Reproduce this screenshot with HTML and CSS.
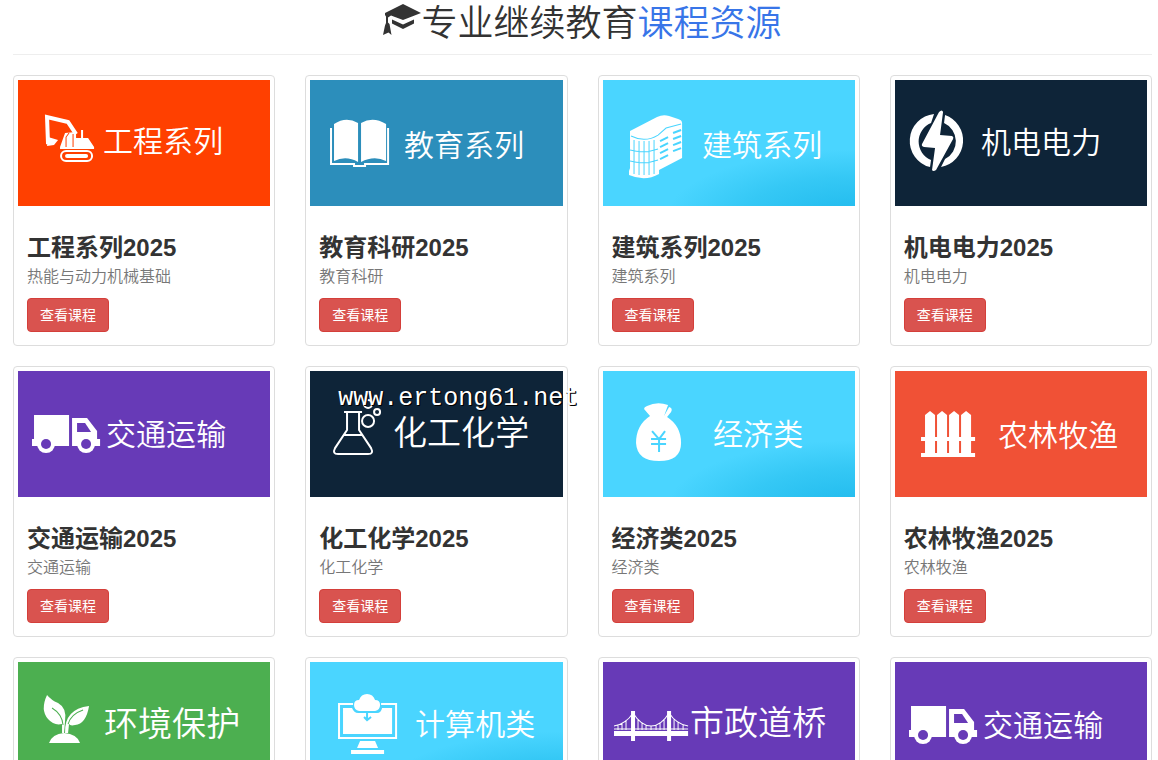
FILE: index.html
```html
<!DOCTYPE html>
<html lang="zh-CN">
<head>
  <meta charset="UTF-8">
  <meta name="viewport" content="width=device-width, initial-scale=1.0">
  <title>专业继续教育课程资源</title>
  <link rel="stylesheet" href="styles.css">
</head>
<body>

  <header class="page-header">
    <h1>
      <svg class="cap" viewBox="0 0 38 31" aria-hidden="true">
        <path d="M2 9L20 0l18 9-18 7L8 11.500l-3 2v5l1.500 1.500 2 11-3-2.500L0 31l2-9.500 1-2.500v-6.500L2 11z"/>
        <path d="M9 15.500l11 5 11-5v4L20 25 9 19.500z"/>
      </svg>专业继续教育<span>课程资源</span>
    </h1>
  </header>

  <main class="courses">

    <div class="card">
      <svg class="banner orange" viewBox="0 0 252 126">
        <path class="line thick" d="M30 64l-1-27 21 5 8 12"/>
        <path d="M30 57l10 3-4 5-7 1z"/>
        <path d="M42 67l5-14 11-1v6h5V50h2v8h5l6 9v2H42z"/>
        <path class="cut" d="M48 67V57l3-4M55 67V54"/>
        <rect class="line" x="43" y="71" width="31" height="10" rx="5"/>
        <rect x="47" y="74" width="23" height="4" rx="2"/>
        <text x="85" y="72">工程系列</text>
      </svg>
      <div class="caption">
        <h3>工程系列2025</h3>
        <p>热能与动力机械基础</p>
        <a class="btn" href="#">查看课程</a>
      </div>
    </div>

    <div class="card">
      <svg class="banner blue" viewBox="0 0 252 126">
        <path d="M24 44q12-8 24-1v39q-12-7-24-1zM51 43q12-7 25 1v37q-12-6-25 1z"/>
        <path class="line" d="M21 48v36h23v2h11v-2h23V48"/>
        <text x="94" y="76">教育系列</text>
      </svg>
      <div class="caption">
        <h3>教育科研2025</h3>
        <p>教育科研</p>
        <a class="btn" href="#">查看课程</a>
      </div>
    </div>

    <div class="card">
      <svg class="banner cyan" viewBox="0 0 252 126">
        <path d="M27 51L54 37q6-3 12-1l9 3q4 1 4 4v35l-23 12v4q-14 8-30 1v-4l1-3z"/>
        <path class="cut" d="M28 56q14 7 27-1l8-7 15-4M27 70q14 4 28-1M27 81q14 4 28-1M31 60v34M36 61v34M41 61v34M46 61v34M51 60v34"/>
        <path class="cut bold" d="M57 61l8-4M70 53l8-3M57 67l8-4M70 59l8-3M57 73l8-4M70 65l8-3M57 79l8-4M70 71l8-3"/>
        <text x="99" y="76">建筑系列</text>
      </svg>
      <div class="caption">
        <h3>建筑系列2025</h3>
        <p>建筑系列</p>
        <a class="btn" href="#">查看课程</a>
      </div>
    </div>

    <div class="card">
      <svg class="banner navy" viewBox="0 0 252 126">
        <path d="M39 34a27 27 0 0 0-4 53l1-7a20 20 0 0 1 0-37zM50 35l-1 8a20 20 0 0 1 1 36l-4 8a27 27 0 0 0 4-52z"/>
        <path d="M44 32q3-3 4 0l-3 23 12 1q2 1 1 3L41 90q-3 2-4 0l3-22-11-1q-3-1-2-3z"/>
        <text x="86" y="73">机电电力</text>
      </svg>
      <div class="caption">
        <h3>机电电力2025</h3>
        <p>机电电力</p>
        <a class="btn" href="#">查看课程</a>
      </div>
    </div>

    <div class="card">
      <svg class="banner purple" viewBox="0 0 252 126">
        <g id="truck">
          <path d="M16 44h35v31H14v-7h2zM54 47h15l10 13v8h3v7H54z"/>
          <circle cx="28" cy="73" r="9"/>
          <circle cx="68" cy="73" r="9"/>
          <path class="hole" d="M59 52h8l6 9H59z"/>
          <circle class="hole" cx="28" cy="73" r="5"/>
          <circle class="hole" cx="68" cy="73" r="5"/>
        </g>
        <text x="88" y="74">交通运输</text>
      </svg>
      <div class="caption">
        <h3>交通运输2025</h3>
        <p>交通运输</p>
        <a class="btn" href="#">查看课程</a>
      </div>
    </div>

    <div class="card">
      <svg class="banner navy" viewBox="0 0 252 126">
        <path class="line" d="M34 41h18M37 41v18L25 77q-3 6 3 6h30q6 0 3-6L49 59V41M33 64h20"/>
        <circle class="line" cx="58" cy="50" r="6"/>
        <circle class="line" cx="67" cy="41" r="3"/>
        <circle class="line" cx="58" cy="33" r="4"/>
        <text class="large" x="83" y="74">化工化学</text>
      </svg>
      <span class="watermark">www.ertong61.net</span>
      <div class="caption">
        <h3>化工化学2025</h3>
        <p>化工化学</p>
        <a class="btn" href="#">查看课程</a>
      </div>
    </div>

    <div class="card">
      <svg class="banner cyan" viewBox="0 0 252 126">
        <path d="M47 45l-6-7q0-2 3-3 10-5 21-1l-4 11 5-9q4 1 2 5l-4 5q14 9 14 26 0 18-22 18T33 72q0-18 14-27z"/>
        <path class="cut bold" d="M49 60l7 8 6-8M48 68h15M48 73h15M56 68v13"/>
        <text x="110" y="74">经济类</text>
      </svg>
      <div class="caption">
        <h3>经济类2025</h3>
        <p>经济类</p>
        <a class="btn" href="#">查看课程</a>
      </div>
    </div>

    <div class="card">
      <svg class="banner red" viewBox="0 0 252 126">
        <path d="M30 44l5-4 5 4v39H30zM42 44l5-4 5 4v39H42zM54 44l5-4 5 4v39H54zM66 44l5-4 5 4v39H66z"/>
        <path d="M26 66h54v4H26zM26 82h54v4H26z"/>
        <text x="103" y="75">农林牧渔</text>
      </svg>
      <div class="caption">
        <h3>农林牧渔2025</h3>
        <p>农林牧渔</p>
        <a class="btn" href="#">查看课程</a>
      </div>
    </div>

    <div class="card">
      <svg class="banner green" viewBox="0 0 252 126">
        <path d="M29 33q4 5 11 8 9 5 7 18l-1 12h-2V62q-8 2-14-5-8-9-1-24z"/>
        <path d="M71 44q-3 18-14 19-5 1-6-1l-1 9h-3q-1-24 24-27z"/>
        <path class="cut" d="M34 46q10 6 11 17M65 48q-12 4-15 14"/>
        <path d="M31 81q3-9 15-10 13 1 16 10z"/>
        <text class="large" x="86" y="74">环境保护</text>
      </svg>
      <div class="caption">
        <h3>环境保护2025</h3>
        <p>环境保护</p>
        <a class="btn" href="#">查看课程</a>
      </div>
    </div>

    <div class="card">
      <svg class="banner cyan" viewBox="0 0 252 126">
        <path class="line" d="M43 42H29v34h57V42H71"/>
        <path d="M33 46h9q2 5 6 5h19q4 0 5-5h10v26H33z"/>
        <path d="M49 49q-5-1-5-6t5-5q2-6 8-6t8 6q5 0 5 5t-5 6z"/>
        <path class="cut bold" d="M57 50v8M54 55l3 3 4-3"/>
        <path d="M50 79h15l3 7H47zM41 88h33v4H41z"/>
        <text x="105" y="73">计算机类</text>
      </svg>
      <div class="caption">
        <h3>计算机类2025</h3>
        <p>计算机类</p>
        <a class="btn" href="#">查看课程</a>
      </div>
    </div>

    <div class="card">
      <svg class="banner purple" viewBox="0 0 252 126">
        <path d="M28 49h4v30h-4zM64 49h4v30h-4zM11 69h74v5H11z"/>
        <path class="line thin" d="M11 64q12-2 19-13 8 13 18 13t18-13q7 11 19 13M11 67h74M15 63v5M19 61v7M23 58v10M35 57v11M39 61v7M43 63v5M48 64v4M53 63v5M57 61v7M61 57v11M71 57v11M75 60v8M80 63v5"/>
        <text class="large" x="87" y="73">市政道桥</text>
      </svg>
      <div class="caption">
        <h3>市政道桥2025</h3>
        <p>市政道桥</p>
        <a class="btn" href="#">查看课程</a>
      </div>
    </div>

    <div class="card">
      <svg class="banner purple" viewBox="0 0 252 126">
        <use href="#truck"/>
        <text x="88" y="74">交通运输</text>
      </svg>
      <div class="caption">
        <h3>交通运输2025</h3>
        <p>交通运输</p>
        <a class="btn" href="#">查看课程</a>
      </div>
    </div>

  </main>

</body>
</html>
```

FILE: styles.css
```css
* {
  box-sizing: border-box;
  margin: 0;
  padding: 0;
}

body {
  font-family: "Liberation Sans", "Noto Sans CJK SC", sans-serif;
  font-size: 14px;
  line-height: 20px;
  color: #333;
  background-color: #fff;
  padding: 4px 6px 0 13px;
}

.page-header {
  text-align: center;
  padding-bottom: 10px;
  margin-bottom: 20px;
  border-bottom: 1px solid #eee;
}

.page-header h1 {
  display: flex;
  justify-content: center;
  font-size: 36px;
  font-weight: 350;
  line-height: 40px;
}

.page-header span {
  color: #3875e8;
}

.cap {
  width: 38px;
  height: 31px;
  fill: #333;
}

.courses {
  display: grid;
  grid-template-columns: repeat(4, 1fr);
  gap: 20px 30px;
}

.card {
  position: relative;
  padding: 4px;
  border: 1px solid #ddd;
  border-radius: 4px;
}

/* Banner pictures */
.banner {
  --bg: #673ab7;
  display: block;
  width: 100%;
  aspect-ratio: 2 / 1;
  background-color: var(--bg);
  fill: #fff;
}

.banner text {
  font-size: 30px;
  font-weight: 350;
}

.banner .large {
  font-size: 34px;
}

.banner .line {
  fill: none;
  stroke: #fff;
  stroke-width: 2;
}

.banner .thick {
  stroke-width: 4;
}

.banner .thin {
  stroke-width: 1;
}

.banner .cut {
  fill: none;
  stroke: var(--bg);
  stroke-width: 1;
}

.banner .bold {
  stroke-width: 2;
}

.banner .hole {
  fill: var(--bg);
}

.orange {
  --bg: #ff4000;
}

.blue {
  --bg: #2c8ebb;
}

.cyan {
  --bg: #4ad5ff;
  background-image: radial-gradient(ellipse 75% 55% at 100% 110%, #1fb9ec 0%, #35c8f5 60%, #4ad5ff 100%);
}

.navy {
  --bg: #0e2438;
}

.red {
  --bg: #f05136;
}

.green {
  --bg: #4caf50;
}

.watermark {
  position: absolute;
  top: 17px;
  left: 32px;
  font-family: "Liberation Mono", monospace;
  font-size: 25px;
  line-height: 30px;
  color: #fff;
  text-shadow: 1px 1px 0 #000, 1px 0 0 #000;
}

/* Card text */
.caption {
  padding: 9px;
}

.caption h3 {
  margin: 20px 0 4px;
  font-size: 24px;
  line-height: 26px;
}

.caption p {
  margin-bottom: 9px;
  font-size: 16px;
  font-weight: 350;
  line-height: 24px;
  color: #777;
}

.btn {
  display: block;
  width: fit-content;
  padding: 6px 12px;
  border: 1px solid #d43f3a;
  border-radius: 4px;
  background-color: #d9534f;
  color: #fff;
  text-decoration: none;
}

.btn:hover {
  background-color: #c9302c;
}
```
